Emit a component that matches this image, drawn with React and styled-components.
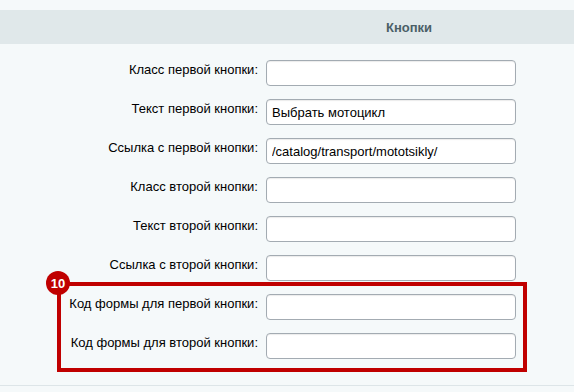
import styled, { createGlobalStyle } from "styled-components";

const GlobalStyle = createGlobalStyle`
  html, body {
    margin: 0;
    padding: 0;
    background: #f5f9fa;
  }
  body {
    font-family: "Liberation Sans", Arial, sans-serif;
  }
`;

const fields = [
  { label: "Класс первой кнопки:", value: "" },
  { label: "Текст первой кнопки:", value: "Выбрать мотоцикл" },
  { label: "Ссылка с первой кнопки:", value: "/catalog/transport/mototsikly/" },
  { label: "Класс второй кнопки:", value: "" },
  { label: "Текст второй кнопки:", value: "" },
  { label: "Ссылка с второй кнопки:", value: "" },
  { label: "Код формы для первой кнопки:", value: "" },
  { label: "Код формы для второй кнопки:", value: "" },
];

export default function App() {
  return (
    <>
      <GlobalStyle />
      <Page>
        <Header>
          <HeaderTitle>Кнопки</HeaderTitle>
        </Header>
        <Form>
          {fields.map((f) => (
            <Row key={f.label}>
              <Label>{f.label}</Label>
              <Input defaultValue={f.value} />
            </Row>
          ))}
          <Highlight>
            <Badge>10</Badge>
          </Highlight>
        </Form>
        <Divider />
      </Page>
    </>
  );
}

const Page = styled.div`
  width: 574px;
  height: 392px;
  padding-top: 10px;
  box-sizing: border-box;
  overflow: hidden;
`;

const Header = styled.div`
  height: 34px;
  background: #e0e8ea;
  display: flex;
  align-items: center;
  padding-left: 386px;
`;

const HeaderTitle = styled.span`
  font-size: 13px;
  font-weight: bold;
  color: #4b5f67;
`;

const Form = styled.div`
  position: relative;
  padding-top: 16px;
  display: flex;
  flex-direction: column;
  gap: 13px;
`;

const Row = styled.div`
  display: grid;
  grid-template-columns: 258px 250px;
  column-gap: 8px;
  align-items: start;
  height: 26px;
`;

const Label = styled.div`
  text-align: right;
  font-size: 13px;
  color: #000;
  padding-top: 2px;
  white-space: nowrap;
`;

const Input = styled.input`
  box-sizing: border-box;
  width: 250px;
  height: 26px;
  margin: 0;
  border: 1px solid #a3abb2;
  border-radius: 4px;
  background: #fff;
  box-shadow: inset 0 1px 1px rgba(0, 0, 0, 0.08);
  padding: 0 5px;
  font-family: "Liberation Sans", Arial, sans-serif;
  font-size: 13px;
  color: #000;
  outline: none;
`;

const Highlight = styled.div`
  position: absolute;
  left: 57px;
  top: 238px;
  width: 470px;
  height: 90px;
  box-sizing: border-box;
  border: 4px solid #c00000;
`;

const Badge = styled.div`
  position: absolute;
  left: -15px;
  top: -15px;
  width: 24px;
  height: 24px;
  border-radius: 50%;
  background: #c00000;
  color: #fff;
  font-size: 13px;
  font-weight: bold;
  display: flex;
  align-items: center;
  justify-content: center;
`;

const Divider = styled.div`
  margin-top: 26px;
  height: 1px;
  background: #dde5e8;
`;
